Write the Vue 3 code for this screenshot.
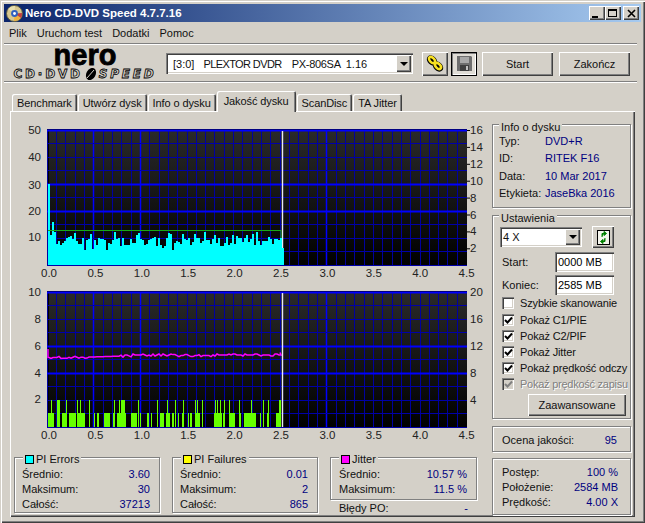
<script setup>
const stats = [
  { title: 'PI Errors', color: '#00ffff', rows: [['Średnio:', '3.60'], ['Maksimum:', '30'], ['Całość:', '37213']] },
  { title: 'PI Failures', color: '#ffff00', rows: [['Średnio:', '0.01'], ['Maksimum:', '2'], ['Całość:', '865']] }
]
const jitterRows = [['Średnio:', '10.57 %'], ['Maksimum:', '11.5 %']]
const tabs = ['Benchmark', 'Utwórz dysk', 'Info o dysku', 'Jakość dysku', 'ScanDisc', 'TA Jitter']
const menu = ['Plik', 'Uruchom test', 'Dodatki', 'Pomoc']
const info = [['Typ:', 'DVD+R'], ['ID:', 'RITEK F16'], ['Data:', '10 Mar 2017'], ['Etykieta:', 'JaseBka 2016']]
const checks = [
  { label: 'Szybkie skanowanie', on: false },
  { label: 'Pokaż C1/PIE', on: true },
  { label: 'Pokaż C2/PIF', on: true },
  { label: 'Pokaż Jitter', on: true },
  { label: 'Pokaż prędkość odczy', on: true },
  { label: 'Pokaż prędkość zapisu', on: true, disabled: true }
]

const xLabels = ['0.0', '0.5', '1.0', '1.5', '2.0', '2.5', '3.0', '3.5', '4.0', '4.5']
const hLines = Array.from({ length: 11 }, (_, i) => ({
  y: Math.floor(10 + i * 13.5) + 0.5,
  bold: i === 0 || i === 4 || i === 6
}))
const vLines = Array.from({ length: 45 }, (_, i) => ({
  x: Math.floor(35.2 + i * 9.32) + 0.5,
  bold: i === 5 || i === 10 || i === 30
}))

// pseudo random read errors, 2px wide columns
let seed = 11
function rnd() {
  seed = (seed * 9301 + 49297) % 233280
  return seed / 233280
}
function errorsPath() {
  let d = 'M36 145'
  for (let x = 36; x < 271; x += 2) {
    let v = 7 + rnd() * 3.2
    if (rnd() > 0.82) v = 10 + rnd() * 2.4
    if (rnd() > 0.92) v = 5.5 + rnd()
    if (x === 36) v = 30
    if (x === 38) v = 11
    if (x === 40) v = 16
    const y = Math.round(145 - v * 2.7)
    d += `V${y}H${x + 2}`
  }
  return d + 'V145Z'
}
const piPath = errorsPath()

const level1 = [[144,162],[171,180],[186,200],[208,228],[232,255],[267,270],[282,285],[291,297],[312,330],[339,345],[351,357],[360,378],[393,411],[420,423],[441,447],[453,456],[471,474],[480,492],[498,510],[516,522],[534,537],[546,552],[564,567],[570,576],[585,600],[606,609],[642,666],[669,675],[687,705],[717,723],[732,768],[780,783],[789,792],[801,804],[828,843]]
const level2 = [[153,156],[171,180],[198,201],[232,235],[240,243],[267,270],[342,345],[357,360],[363,375],[415,418],[472,475],[502,505],[525,528],[550,553],[585,588],[592,595],[606,609],[645,648],[651,654],[660,663],[672,675],[688,691],[717,720],[753,756],[790,793],[803,806],[837,843]]
function barsPath(list, y) {
  return list.map(([a, b]) => {
    const x1 = Math.round(a / 3) - 12
    const x2 = Math.max(Math.round(b / 3) - 12, x1 + 1)
    return `M${x1} 145V${y}H${x2}V145Z`
  }).join('')
}
const pifPath = barsPath(level1, 131) + barsPath(level2, 118)

function jitterPath() {
  let d = 'M36 67V75.5'
  for (let x = 37; x < 270; x += 2) {
    const base = x < 80 ? 75.5 - (x - 37) * 0.01 : x < 120 ? 75 - (x - 80) * 0.03 : 73
    const drift = x > 160 && x < 200 ? 0.6 : 0
    const wob = x > 75 && x < 108 ? 0 : Math.round(rnd() * 2 - 1)
    d += `L${x} ${base + drift + wob}`
  }
  return d + 'L268 70.5L269 73'
}
const jitPath = jitterPath()

const charts = [
  {
    left: [['50', 10], ['40', 37], ['30', 65], ['20', 91], ['10', 117]],
    right: ['16', '14', '12', '10', '8', '6', '4', '2'].map((t, i) => [t, 10 + i * 16.9])
  },
  {
    left: [['10', 10], ['8', 37], ['6', 64], ['4', 91], ['2', 117]],
    right: ['20', '16', '12', '8', '4'].map((t, i) => [t, 10 + i * 27])
  }
]
</script>

<template>
  <div class="window">
    <div class="titlebar">
      <svg class="app-icon" width="17" height="17" viewBox="0 0 17 17">
        <circle cx="8.5" cy="8.5" r="8" fill="#d8c890" stroke="#5a5a40" />
        <path d="M8.5 8.5L2 4A8 8 0 0 1 9 1Z" fill="#e8e0b0" />
        <path d="M8.5 8.5L15 13A8 8 0 0 1 8 16Z" fill="#f0b040" />
        <path d="M8.5 8.5L16 8A8 8 0 0 1 15 13Z" fill="#c04040" />
        <circle cx="8.5" cy="8.5" r="3.4" fill="#3060c0" />
        <circle cx="8.5" cy="8.5" r="1.4" fill="#fff" />
      </svg>
      <span class="title-text">Nero CD-DVD Speed 4.7.7.16</span>
      <div class="win-buttons">
        <div class="win-btn"><i class="min-mark"></i></div>
        <div class="win-btn"><i class="max-mark"></i></div>
        <div class="win-btn close">
          <svg width="9" height="9" viewBox="0 0 9 9"><path d="M1 1L8 8M8 1L1 8" stroke="#000" stroke-width="1.6" /></svg>
        </div>
      </div>
    </div>

    <div class="menu">
      <span v-for="m in menu" :key="m">{{ m }}</span>
    </div>

    <div class="toolbar">
      <div class="logo">
        <div class="logo-nero">nero</div>
        <div class="logo-sub">
          <span>CD·DVD</span>
          <svg width="14" height="12" viewBox="0 0 14 12"><ellipse cx="7" cy="6" rx="4.6" ry="6.4" transform="rotate(28 7 6)" fill="#000" /><path d="M3 10L10 2" stroke="#d4d0c8" stroke-width="1" /></svg>
          <span class="speed">SPEED</span>
        </div>
      </div>
      <div class="combo drive">
        <span class="combo-text">[3:0] <span class="model">PLEXTOR DVDR</span> <span class="firmware">PX-806SA</span> <span class="rev">1.16</span></span>
        <div class="combo-arrow"><i></i></div>
      </div>
      <button class="btn icon-btn">
        <svg width="18" height="17" viewBox="0 0 18 17">
          <g fill="none" stroke="#000" stroke-width="4.4">
            <ellipse cx="6" cy="5.5" rx="3.6" ry="2.2" transform="rotate(45 6 5.5)" />
            <ellipse cx="12" cy="11.5" rx="3.6" ry="2.2" transform="rotate(45 12 11.5)" />
          </g>
          <g fill="none" stroke="#f8e020" stroke-width="2.6">
            <ellipse cx="6" cy="5" rx="3.6" ry="2.2" transform="rotate(45 6 5)" />
            <ellipse cx="12" cy="11" rx="3.6" ry="2.2" transform="rotate(45 12 11)" />
          </g>
        </svg>
      </button>
      <button class="btn icon-btn save">
        <svg width="15" height="15" viewBox="0 0 15 15">
          <path d="M0 0H14L15 1V15H0Z" fill="#6e6e6e" />
          <rect x="3" y="1" width="9" height="6" fill="#a8a8a8" />
          <rect x="3" y="9" width="9" height="6" fill="#404040" />
          <rect x="9" y="10" width="2" height="4" fill="#c0c0c0" />
        </svg>
      </button>
      <button class="btn action start">Start</button>
      <button class="btn action">Zakończ</button>
    </div>

    <div class="tabs">
      <div v-for="t in tabs" :key="t" class="tab" :class="{ active: t === 'Jakość dysku' }">{{ t }}</div>
    </div>

    <div class="panel">
      <div class="left-col">
        <svg v-for="(c, n) in charts" :key="n" class="chart" width="480" height="162" viewBox="0 0 480 162">
          <defs>
            <linearGradient :id="'bg' + n" x1="0" y1="0" x2="0" y2="1">
              <stop offset="0" stop-color="#2a2a2a" />
              <stop offset="1" stop-color="#000" />
            </linearGradient>
          </defs>
          <rect x="35" y="9" width="420" height="137" :fill="'url(#bg' + n + ')'" />
          <rect x="35" y="9" width="2" height="137" fill="#000" />
          <rect x="35" y="9" width="420" height="1" fill="#000" />
          <path v-for="l in vLines" :key="l.x" :d="`M${l.x} 10V146`" :stroke="l.bold ? '#0000ff' : '#0000a0'" :stroke-width="l.bold ? 1.5 : 1" />
          <path v-for="l in hLines" :key="l.y" :d="`M35 ${l.y}H455`" :stroke="l.bold ? '#0000ff' : '#0000a8'" :stroke-width="l.bold ? 2 : 1" />

          <template v-if="n === 0">
            <path d="M270.5 11V145" stroke="#e8e8f8" stroke-width="1.4" />
            <path :d="piPath" fill="#00ffff" />
            <path d="M36 110.5H269V118" fill="none" stroke="#18a818" />
          </template>
          <template v-else>
            <path :d="pifPath" fill="#66ff00" />
            <path :d="jitPath" fill="none" stroke="#ff00ff" stroke-width="1.5" />
            <path d="M270.5 11V145" stroke="#e8e8f8" stroke-width="1.4" />
          </template>

          <text v-for="l in c.left" :key="l[0]" class="axis" x="29" :y="l[1] + 4" text-anchor="end">{{ l[0] }}</text>
          <g v-for="r in c.right" :key="r[0]">
            <path v-if="n === 0" :d="`M455 ${r[1] + 0.5}H458`" stroke="#000" />
            <text class="axis" x="458" :y="r[1] + 4">{{ r[0] }}</text>
          </g>
          <text v-for="(t, i) in xLabels" :key="t" class="axis" :x="37 + i * 46.4" y="157" text-anchor="middle">{{ t }}</text>
        </svg>

        <div class="stats">
          <div v-for="s in stats" :key="s.title" class="group stat">
            <div class="legend"><i :style="{ background: s.color }"></i>{{ s.title }}</div>
            <div v-for="r in s.rows" :key="r[0]" class="stat-row"><span>{{ r[0] }}</span><b>{{ r[1] }}</b></div>
          </div>
          <div class="jitter-col">
            <div class="group stat jitter">
              <div class="legend"><i style="background: #ff00ff"></i>Jitter</div>
              <div v-for="r in jitterRows" :key="r[0]" class="stat-row"><span>{{ r[0] }}</span><b>{{ r[1] }}</b></div>
            </div>
            <div class="stat-row errors"><span>Błędy PO:</span><b>-</b></div>
          </div>
        </div>
      </div>

      <div class="right-col">
        <div class="group info">
          <div class="legend plain">Info o dysku</div>
          <div v-for="r in info" :key="r[0]" class="info-row"><span>{{ r[0] }}</span><b>{{ r[1] }}</b></div>
        </div>

        <div class="group settings">
          <div class="legend plain">Ustawienia</div>
          <div class="speed-row">
            <div class="combo speed-combo">
              <span class="combo-text">4 X</span>
              <div class="combo-arrow"><i></i></div>
            </div>
            <button class="btn refresh">
              <svg width="13" height="15" viewBox="0 0 13 15">
                <rect x="0.5" y="0.5" width="12" height="14" fill="#f4f4ec" stroke="#000" />
                <path d="M5 7V3.5H7M7 1.5V5.5L9.5 3.5Z" fill="#008000" stroke="#008000" />
                <path d="M8 8V11.5H6M6 9.5V13.5L3.5 11.5Z" fill="#008000" stroke="#008000" />
              </svg>
            </button>
          </div>
          <div class="field"><span>Start:</span><div class="input">0000 MB</div></div>
          <div class="field"><span>Koniec:</span><div class="input">2585 MB</div></div>
          <div class="checks">
            <div v-for="c in checks" :key="c.label" class="check" :class="{ disabled: c.disabled }">
              <div class="box">
                <svg v-if="c.on" width="9" height="9" viewBox="0 0 9 9"><path d="M1 4L3.5 6.5L8 1.5" fill="none" stroke="currentColor" stroke-width="2" /></svg>
              </div>
              <span>{{ c.label }}</span>
            </div>
          </div>
          <button class="btn advanced">Zaawansowane</button>
        </div>

        <div class="group score"><span>Ocena jakości:</span><b>95</b></div>

        <div class="group progress">
          <div class="stat-row"><span>Postęp:</span><b>100 %</b></div>
          <div class="stat-row"><span>Położenie:</span><b>2584 MB</b></div>
          <div class="stat-row"><span>Prędkość:</span><b>4.00 X</b></div>
        </div>
      </div>
    </div>
  </div>
</template>

<style>
body { margin: 0; background: #d4d0c8; }
</style>

<style scoped>
.window {
  width: 645px;
  height: 523px;
  box-sizing: border-box;
  padding: 4px 4px 0;
  overflow: hidden;
  background: #d4d0c8;
  color: #111;
  font: 11px/14px "Liberation Sans", Arial, sans-serif;
  box-shadow: inset 1px 1px 0 #d4d0c8, inset 2px 2px 0 #fff, inset -1px -1px 0 #404040, inset -2px -2px 0 #808080;
}
.titlebar {
  height: 18px;
  display: flex;
  align-items: center;
  background: linear-gradient(90deg, #0a246a, #a6caf0);
  color: #fff;
}
.app-icon { margin: 0 2px 0 2px; }
.title-text { font-size: 11.5px; font-weight: bold; }
.win-buttons { margin-left: auto; display: flex; margin-right: 2px; }
.win-btn {
  width: 16px;
  height: 14px;
  position: relative;
  display: flex;
  align-items: center;
  justify-content: center;
  background: #d4d0c8;
  box-shadow: inset 1px 1px 0 #fff, inset -1px -1px 0 #404040, inset -2px -2px 0 #808080;
}
.win-btn.close { margin-left: 2px; }
.min-mark { width: 6px; height: 2px; background: #000; margin: 7px 4px 0 0; }
.max-mark { width: 9px; height: 8px; box-sizing: border-box; border: 1px solid #000; border-top-width: 2px; margin-right: 1px; }

.menu {
  height: 21px;
  display: flex;
  align-items: center;
  gap: 10px;
  padding-left: 5px;
}

.toolbar {
  height: 35px;
  padding-top: 2px;
  display: flex;
  align-items: center;
  border-top: 1px solid #808080;
  border-bottom: 1px solid #808080;
  box-shadow: inset 0 1px 0 #fff, 0 1px 0 #fff;
  width: 633px;
  box-sizing: content-box;
}
.logo {
  width: 160px;
  margin: -3px 2px 0 0;
  padding-left: 2px;
  box-sizing: border-box;
  display: flex;
  flex-direction: column;
  align-items: center;
  color: #000;
}
.logo-nero {
  font: bold 29px/22px "Liberation Sans", sans-serif;
  -webkit-text-stroke: 0.8px #000;
  height: 24px;
}
.logo-sub {
  display: flex;
  align-items: center;
  gap: 1px;
  height: 12px;
  font: bold 12px/12px "DejaVu Sans", sans-serif;
  letter-spacing: 2.8px;
  color: #d4d0c8;
  -webkit-text-stroke: 0.8px #000;
  white-space: nowrap;
}
.speed { font-style: italic; }
.combo {
  position: relative;
  display: flex;
  align-items: center;
  box-sizing: border-box;
  background: #fff;
  box-shadow: inset 1px 1px 0 #808080, inset 2px 2px 0 #404040, inset -1px -1px 0 #fff, inset -2px -2px 0 #d4d0c8;
}
.combo-text { padding-left: 7px; white-space: nowrap; }
.model { margin-left: 6px; letter-spacing: -0.6px; }
.firmware { margin-left: 7px; letter-spacing: -0.3px; }
.rev { margin-left: 2px; }
.combo-arrow {
  position: absolute;
  right: 2px;
  top: 2px;
  bottom: 2px;
  width: 15px;
  display: flex;
  align-items: center;
  justify-content: center;
  background: #d4d0c8;
  box-shadow: inset 1px 1px 0 #fff, inset -1px -1px 0 #404040, inset -2px -2px 0 #808080;
}
.combo-arrow i { width: 0; height: 0; border: 4px solid transparent; border-top-color: #000; border-bottom: 0; }
.drive { width: 247px; height: 21px; margin-right: 9px; }
.btn {
  padding: 0;
  border: 0;
  display: flex;
  align-items: center;
  justify-content: center;
  background: #d4d0c8;
  color: #111;
  font: inherit;
  box-sizing: border-box;
  box-shadow: inset 1px 1px 0 #fff, inset -1px -1px 0 #404040, inset -2px -2px 0 #808080;
}
.icon-btn { width: 26px; height: 24px; margin-right: 3px; }
.icon-btn.save {
  border: 1px solid #000;
  box-shadow: inset 1px 1px 0 #808080, inset -1px -1px 0 #fff;
  background: #e0ddd6;
  margin-right: 5px;
}
.action { width: 71px; height: 24px; margin-right: 6px; }

.tabs {
  display: flex;
  align-items: flex-end;
  height: 20px;
  margin: 9px 0 0 8px;
  position: relative;
  z-index: 1;
  letter-spacing: -0.1px;
}
.tab {
  height: 17px;
  box-sizing: border-box;
  padding: 2px 5px 0;
  margin-right: 1px;
  border-radius: 2px 2px 0 0;
  box-shadow: inset 1px 1px 0 #fff, inset -1px 0 0 #404040, inset -2px 0 0 #808080;
  white-space: nowrap;
}
.tab.active { height: 21px; padding: 3px 7px 0; margin-bottom: -1px; background: #d4d0c8; }

.panel {
  height: 406px;
  margin: 0 6px;
  display: flex;
  box-sizing: border-box;
  box-shadow: inset 1px 1px 0 #fff, inset -1px -1px 0 #404040, inset -2px -2px 0 #808080;
}
.left-col { width: 482px; padding: 9px 0 0 2px; box-sizing: border-box; }
.chart { display: block; }
.axis { font: 11.5px "Liberation Sans", Arial, sans-serif; fill: #222; }

.group {
  position: relative;
  box-sizing: border-box;
  border: 1px solid #808080;
  box-shadow: 1px 1px 0 #fff, inset 1px 1px 0 #fff;
}
.legend {
  position: absolute;
  top: -6px;
  left: 8px;
  display: flex;
  align-items: center;
  padding: 0 2px;
  background: #d4d0c8;
}
.legend.plain { top: -5px; left: 6px; }
.legend i { width: 7px; height: 7px; border: 1px solid #000; margin-right: 2px; }
.stats { display: flex; gap: 12px; margin: 13px 0 0 2px; }
.stat { width: 146px; height: 56px; padding: 9px 9px 0 7px; }
.stat-row { display: flex; justify-content: space-between; height: 15px; line-height: 15px; }
.stat-row b, .info-row b, .score b { font-weight: normal; color: #000080; }
.jitter-col { width: 147px; }
.jitter { width: 147px; height: 43px; padding-left: 8px; }
.errors { margin: 1px 9px 0 9px; height: 14px; }

.right-col { width: 139px; padding-top: 13px; box-sizing: content-box; }
.info { height: 84px; padding: 8px 0 0 6px; }
.info-row { display: flex; height: 17.3px; line-height: 17px; }
.info-row span { width: 46px; }
.settings { height: 204px; margin-top: 7px; padding: 10px 0 0 7px; }
.speed-row { display: flex; align-items: center; height: 22px; gap: 10px; }
.speed-combo { width: 82px; height: 20px; }
.speed-combo .combo-text { padding-left: 3px; }
.refresh { width: 22px; height: 22px; }
.field { display: flex; align-items: center; justify-content: space-between; height: 20px; margin: 4px 16px 0 2px; }
.field + .field { margin-top: 3px; }
.input {
  width: 59px;
  height: 20px;
  box-sizing: border-box;
  padding-left: 3px;
  line-height: 20px;
  background: #fff;
  color: #000;
  box-shadow: inset 1px 1px 0 #808080, inset 2px 2px 0 #404040, inset -1px -1px 0 #fff, inset -2px -2px 0 #d4d0c8;
}
.checks { margin: -1px 2px 0 2px; overflow: hidden; letter-spacing: -0.15px; }
.check { display: flex; align-items: center; height: 16px; white-space: nowrap; }
.check span { margin-left: 6px; }
.check:first-child { height: 18px; }
.box {
  flex: none;
  width: 12px;
  height: 12px;
  display: flex;
  align-items: center;
  justify-content: center;
  background: #fff;
  color: #000;
  box-shadow: inset 1px 1px 0 #808080, inset 2px 2px 0 #404040, inset -1px -1px 0 #fff, inset -2px -2px 0 #d4d0c8;
}
.check.disabled { color: #808080; text-shadow: 1px 1px 0 #fff; letter-spacing: -0.25px; }
.check.disabled .box { background: #d4d0c8; color: #808080; }
.advanced { width: 98px; height: 22px; margin: 2px 0 0 28px; }
.score { height: 26px; margin-top: 7px; display: flex; align-items: center; justify-content: space-between; padding: 2px 13px 0 9px; }
.progress { height: 57px; margin-top: 6px; padding: 6px 12px 0 9px; }
</style>
